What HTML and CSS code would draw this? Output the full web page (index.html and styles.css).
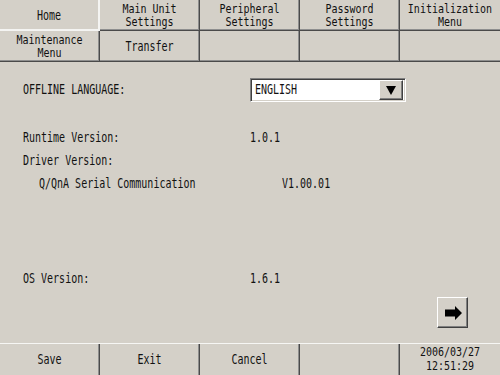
FILE: index.html
```html
<!DOCTYPE html>
<html>
<head>
<meta charset="utf-8">
<link rel="stylesheet" href="styles.css">
</head>
<body>
<div class="screen">
  <div class="tabs">
    <div class="tab sel"><span class="tx">Home</span></div>
    <div class="tab"><span class="tx">Main Unit</span><span class="tx">Settings</span></div>
    <div class="tab"><span class="tx">Peripheral</span><span class="tx">Settings</span></div>
    <div class="tab"><span class="tx">Password</span><span class="tx">Settings</span></div>
    <div class="tab last"><span class="tx">Initialization</span><span class="tx">Menu</span></div>
    <div class="tab"><span class="tx">Maintenance</span><span class="tx">Menu</span></div>
    <div class="tab"><span class="tx">Transfer</span></div>
    <div class="tab"></div>
    <div class="tab"></div>
    <div class="tab last"></div>
  </div>

  <div class="content">
    <div class="lang-row">
      <div class="label"><span class="tx">OFFLINE LANGUAGE:</span></div>
      <div class="dropdown">
        <span class="tx value">ENGLISH</span>
        <div class="drop-btn"><span class="tri"></span></div>
      </div>
    </div>

    <div class="info">
      <div class="label"><span class="tx">Runtime Version:</span></div>
      <div class="val"><span class="tx">1.0.1</span></div>
      <div class="label"><span class="tx">Driver Version:</span></div>
      <div class="val"></div>
      <div class="label sub"><span class="tx">Q/QnA Serial Communication</span></div>
      <div class="val sub"><span class="tx">V1.00.01</span></div>
    </div>

    <div class="info os">
      <div class="label"><span class="tx">OS Version:</span></div>
      <div class="val"><span class="tx">1.6.1</span></div>
    </div>

    <div class="actions">
      <div class="next-btn">
        <svg width="17" height="14" viewBox="0 0 17 14"><path d="M0 3.5H10V0L17 7L10 14V10.5H0Z" fill="#000"/></svg>
      </div>
    </div>
  </div>

  <div class="footer">
    <div class="fcell"><span class="tx">Save</span></div>
    <div class="fcell"><span class="tx">Exit</span></div>
    <div class="fcell"><span class="tx">Cancel</span></div>
    <div class="fcell"></div>
    <div class="fcell last"><span class="tx">2006/03/27</span><span class="tx">12:51:29</span></div>
  </div>
</div>
</body>
</html>
```

FILE: styles.css
```css
* { box-sizing: border-box; }

html, body {
  margin: 0;
  padding: 0;
  background: #d4d0c8;
}

body {
  width: 500px;
  height: 375px;
  overflow: hidden;
  font-family: "DejaVu Sans Mono", "Liberation Mono", monospace;
  font-size: 10px;
  color: #111;
}

.screen {
  width: 500px;
  height: 375px;
  display: flex;
  flex-direction: column;
}

.tx {
  display: inline-block;
  line-height: 12px;
  white-space: pre;
  transform: scaleY(1.4);
}

/* Tabs */
.tabs {
  display: grid;
  grid-template-columns: repeat(5, 100px);
  grid-template-rows: 31px 31px;
  height: 62px;
}

.tab {
  display: flex;
  flex-direction: column;
  align-items: center;
  justify-content: center;
  border-right: 1px solid #4a4a4a;
  border-bottom: 1px solid #4a4a4a;
  box-shadow: inset -1px -1px #8e8e8e;
  padding-top: 2px;
}

.tab .tx,
.fcell .tx {
  display: block;
  text-align: center;
  line-height: 9.5px;
  margin: 2px 0;
  transform: scaleY(1.14);
}

.tab .tx:only-child,
.fcell .tx:only-child {
  transform: scaleY(1.4);
}

.tab.last {
  border-right: none;
  box-shadow: inset 0 -1px #8e8e8e;
}

.tab.sel {
  border-right: 2px solid #f4f4f2;
  border-bottom: 2px solid #f4f4f2;
  box-shadow: none;
}

/* Content */
.content {
  height: 281px;
  padding: 16px 32px 0 23px;
  display: flex;
  flex-direction: column;
}

.lang-row {
  display: flex;
  align-items: center;
  height: 24px;
}

.label {
  width: 227px;
  flex: none;
}

.dropdown {
  width: 156px;
  height: 24px;
  display: flex;
  align-items: center;
  background: #fff;
  border: 1px solid;
  border-color: #808080 #ffffff #ffffff #808080;
  box-shadow: inset 1px 1px #404040, inset -1px -1px #d4d0c8;
  padding: 2px;
}

.dropdown .value {
  padding-left: 2px;
}

.drop-btn {
  margin-left: auto;
  width: 24px;
  height: 20px;
  background: #d4d0c8;
  border: 1px solid;
  border-color: #ffffff #404040 #404040 #ffffff;
  box-shadow: inset -1px -1px #808080;
  display: flex;
  align-items: center;
  justify-content: center;
}

.tri {
  width: 0;
  height: 0;
  border-left: 5px solid transparent;
  border-right: 5px solid transparent;
  border-top: 9px solid #000;
  margin-right: 1px;
}

.info {
  display: grid;
  grid-template-columns: 227px auto;
  grid-auto-rows: 23px;
  align-items: center;
  margin-top: 24px;
}

.info .label.sub { padding-left: 16px; }
.info .val.sub { padding-left: 32px; }

.info.os { margin-top: 72px; }

.actions {
  display: flex;
  justify-content: flex-end;
  margin-top: 7px;
}

.next-btn {
  width: 31px;
  height: 31px;
  display: flex;
  align-items: center;
  justify-content: center;
  background: #d4d0c8;
  border: 1px solid;
  border-color: #ffffff #404040 #404040 #ffffff;
  box-shadow: inset -1px -1px #808080;
}

.next-btn svg { display: block; margin-left: 1px; }

/* Footer */
.footer {
  display: grid;
  grid-template-columns: repeat(5, 100px);
  height: 32px;
  border-top: 1px solid #f6f6f4;
}

.fcell {
  display: flex;
  flex-direction: column;
  align-items: center;
  justify-content: center;
  border-right: 1px solid #4a4a4a;
  box-shadow: inset -1px 0 #8e8e8e;
}

.fcell.last {
  border-right: none;
  box-shadow: none;
}
```
